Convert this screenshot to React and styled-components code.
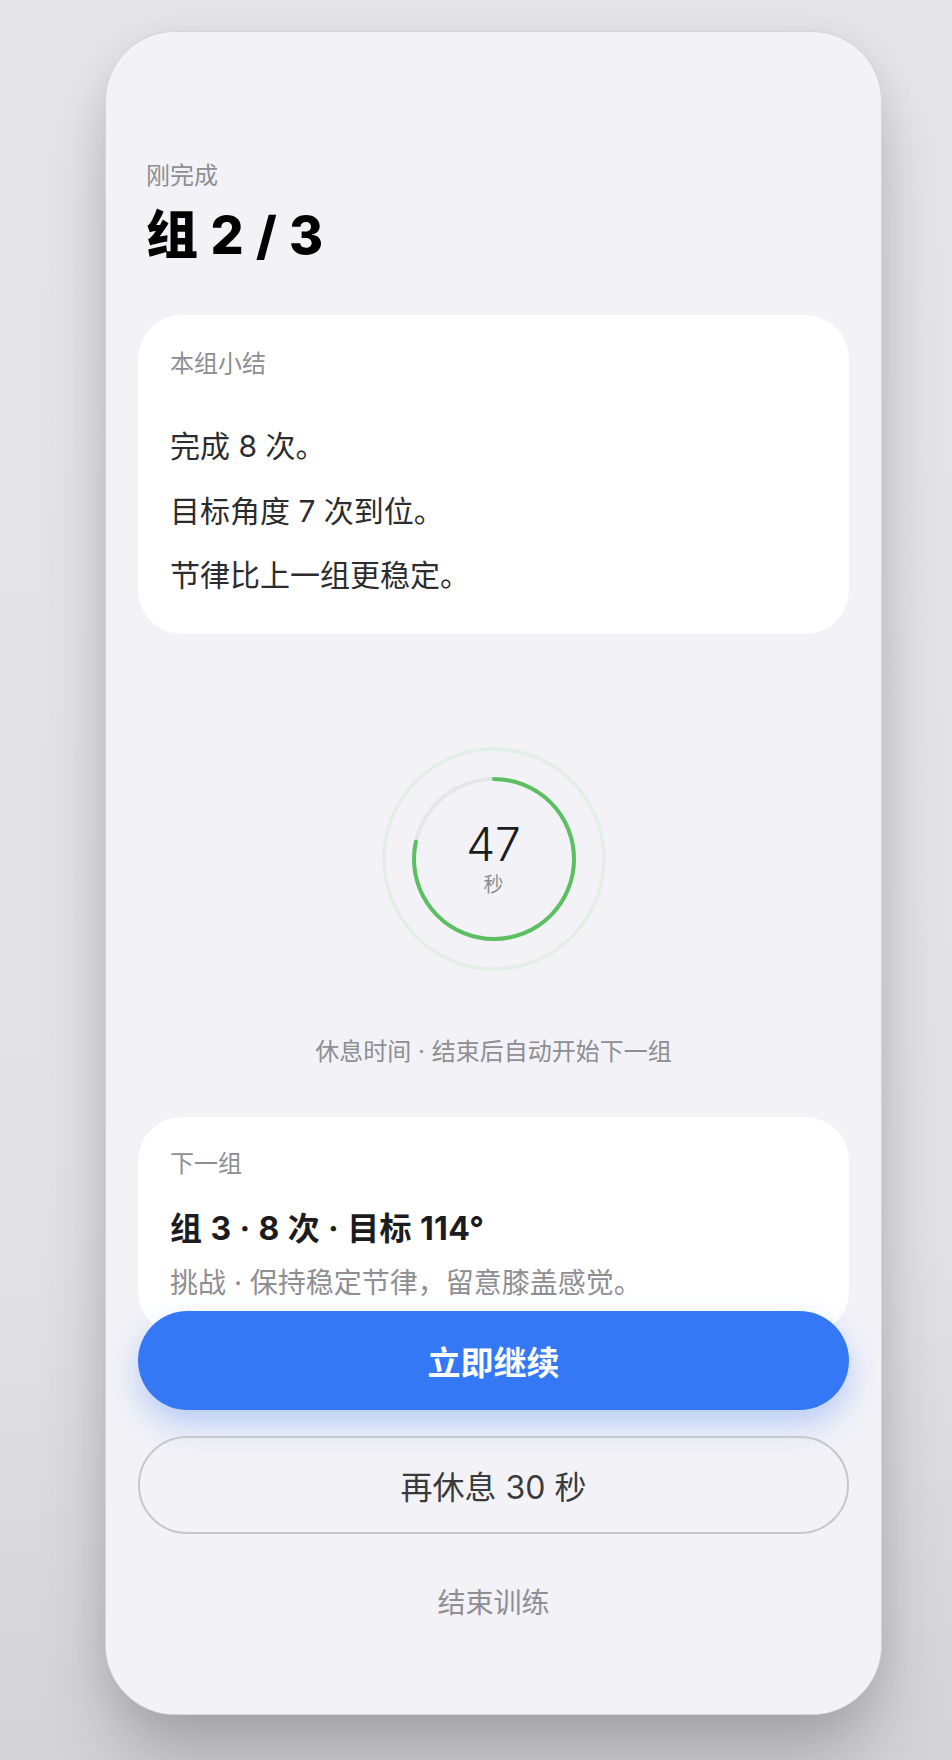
import React, { useState } from 'react';
import styled, { createGlobalStyle } from 'styled-components';

const GlobalStyle = createGlobalStyle`
  html, body {
    margin: 0;
    padding: 0;
    height: 1760px;
    overflow: hidden;
  }
  body {
    background: linear-gradient(180deg, #e6e6ea 0%, #e2e2e6 70%, #d4d4d8 100%);
    font-family: "Inter", "Noto Sans CJK SC", sans-serif;
    -webkit-font-smoothing: antialiased;
  }
`;

const Stage = styled.div`
  padding: 31px 0 0 105px;
`;

const Phone = styled.div`
  box-sizing: border-box;
  width: 777px;
  height: 1684px;
  border: 1px solid #d4d4d9;
  border-radius: 70px;
  background: #f2f2f7;
  overflow: hidden;
  display: grid;
  grid-template: 1fr / 1fr;
  box-shadow: 0 48px 70px -6px rgba(0, 0, 0, 0.22), 0 0 40px rgba(0, 0, 0, 0.06);
`;

const Screen = styled.div`
  grid-area: 1 / 1;
  padding: 128px 32px 0;
  display: flex;
  flex-direction: column;
`;

const Header = styled.header`
  padding-left: 8px;
`;

const Eyebrow = styled.div`
  font-size: 24px;
  line-height: 32px;
  color: #8e8e93;
`;

const Title = styled.h1`
  margin: 13px 0 0;
  font-size: 52px;
  line-height: 62px;
  font-weight: 800;
  color: #000;
  letter-spacing: 0.5px;
`;

const Card = styled.section`
  margin-top: ${(p) => p.$gap}px;
  background: #fff;
  border-radius: 44px;
  padding: ${(p) => p.$pad};
`;

const CardLabel = styled.div`
  font-size: 24px;
  line-height: 34px;
  color: #8e8e93;
`;

const SummaryList = styled.div`
  margin-top: 44px;
  display: flex;
  flex-direction: column;
  gap: 22.5px;
`;

const SummaryLine = styled.div`
  font-size: 30px;
  line-height: 42px;
  color: #2c2c2e;
`;

const TimerWrap = styled.div`
  margin-top: 111px;
  align-self: center;
  display: grid;
  place-items: center;
`;

const RingSvg = styled.svg`
  grid-area: 1 / 1;
  display: block;
`;

const TimerText = styled.div`
  grid-area: 1 / 1;
  display: flex;
  flex-direction: column;
  align-items: center;
`;

const Seconds = styled.div`
  font-size: 46px;
  line-height: 46px;
  font-weight: 300;
  color: #1c1c1e;
`;

const Unit = styled.div`
  margin-top: 6px;
  font-size: 20px;
  line-height: 24px;
  color: #8e8e93;
`;

const Caption = styled.div`
  margin-top: 62px;
  text-align: center;
  font-size: 24px;
  line-height: 34px;
  color: #8e8e93;
`;

const NextTitle = styled.div`
  margin-top: 27px;
  font-size: 32px;
  line-height: 42px;
  font-weight: 700;
  letter-spacing: 0.4px;
  color: #1c1c1e;
`;

const NextHint = styled.div`
  margin-top: 13px;
  font-size: 28px;
  line-height: 40px;
  color: #8e8e93;
`;

const Footer = styled.div`
  grid-area: 1 / 1;
  align-self: end;
  padding: 0 32px 68px;
  display: flex;
  flex-direction: column;
  gap: 26px;
  background: linear-gradient(180deg, rgba(242, 242, 247, 0) 50px, #f2f2f7 50px);
`;

const Button = styled.button`
  box-sizing: border-box;
  width: 100%;
  height: ${(p) => (p.$variant === 'primary' ? 99 : 98)}px;
  border-radius: 50px;
  font-family: inherit;
  font-size: ${(p) => (p.$variant === 'primary' ? 33 : 32)}px;
  font-weight: ${(p) => (p.$variant === 'primary' ? 700 : 400)};
  cursor: pointer;
  border: ${(p) => (p.$variant === 'primary' ? 'none' : '2.5px solid #c7c7cc')};
  background: ${(p) => (p.$variant === 'primary' ? '#3478f6' : 'transparent')};
  color: ${(p) => (p.$variant === 'primary' ? '#fff' : '#3a3a3c')};
  box-shadow: ${(p) => (p.$variant === 'primary' ? '0 14px 30px rgba(52, 120, 246, 0.3)' : 'none')};
`;

const TextButton = styled.button`
  border: none;
  background: none;
  padding: 23px 0;
  font-family: inherit;
  font-size: 28px;
  line-height: 40px;
  color: #8e8e93;
  cursor: pointer;
`;

const Ring = ({ left, total }) => {
  const r = 80;
  const c = 2 * Math.PI * r;
  const done = Math.min(left / total, 1);
  return (
    <RingSvg width="228" height="228" viewBox="0 0 228 228">
      <circle cx="114" cy="114" r="110" fill="none" stroke="#e3efe6" strokeWidth="3.5" />
      <circle cx="114" cy="114" r={r} fill="none" stroke="#e5e5ea" strokeWidth="4" />
      <circle
        cx="114"
        cy="114"
        r={r}
        fill="none"
        stroke="#5cc062"
        strokeWidth="4"
        strokeLinecap="round"
        strokeDasharray={`${c * done} ${c}`}
        transform="rotate(-90 114 114)"
      />
    </RingSvg>
  );
};

const summary = ['完成 8 次。', '目标角度 7 次到位。', '节律比上一组更稳定。'];

const App = () => {
  const [left, setLeft] = useState(47);

  return (
    <Stage>
      <GlobalStyle />
      <Phone>
        <Screen>
          <Header>
            <Eyebrow>刚完成</Eyebrow>
            <Title>组 2 / 3</Title>
          </Header>

          <Card $gap={48} $pad="32px 32px 38px">
            <CardLabel>本组小结</CardLabel>
            <SummaryList>
              {summary.map((line) => (
                <SummaryLine key={line}>{line}</SummaryLine>
              ))}
            </SummaryList>
          </Card>

          <TimerWrap>
            <Ring left={left} total={60} />
            <TimerText>
              <Seconds>{left}</Seconds>
              <Unit>秒</Unit>
            </TimerText>
          </TimerWrap>

          <Caption>休息时间 · 结束后自动开始下一组</Caption>

          <Card $gap={48} $pad="30px 32px 32px">
            <CardLabel>下一组</CardLabel>
            <NextTitle>组 3 · 8 次 · 目标 114°</NextTitle>
            <NextHint>挑战 · 保持稳定节律，留意膝盖感觉。</NextHint>
          </Card>
        </Screen>

        <Footer>
          <Button $variant="primary">立即继续</Button>
          <Button onClick={() => setLeft(left + 30)}>再休息 30 秒</Button>
          <TextButton>结束训练</TextButton>
        </Footer>
      </Phone>
    </Stage>
  );
};

export default App;
